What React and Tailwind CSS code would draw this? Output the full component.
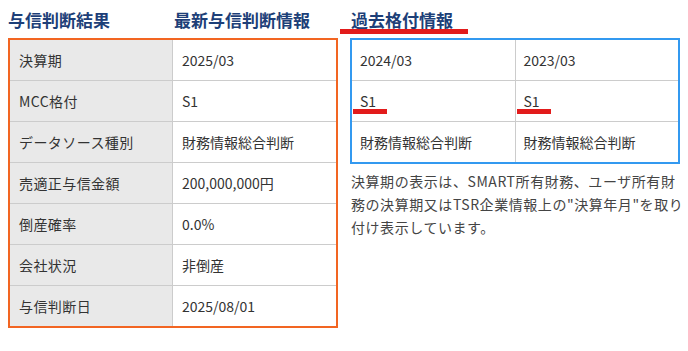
import React from "react";

const rows = [
  { label: "決算期", value: "2025/03" },
  { label: "MCC格付", value: "S1" },
  { label: "データソース種別", value: "財務情報総合判断" },
  { label: "売適正与信金額", value: "200,000,000円" },
  { label: "倒産確率", value: "0.0%" },
  { label: "会社状況", value: "非倒産" },
  { label: "与信判断日", value: "2025/08/01" },
];

const past = [
  { period: "2024/03", rating: "S1", source: "財務情報総合判断" },
  { period: "2023/03", rating: "S1", source: "財務情報総合判断" },
];

const App = () => {
  return (
    <div
      className="w-[688px] h-[351px] bg-white flex pl-[8px] text-[14px] text-[#333]"
      style={{ fontFamily: '"Noto Sans CJK JP", "Noto Sans", sans-serif' }}
    >
      {/* 左: 与信判断結果 */}
      <div className="w-[330px] flex flex-col">
        <div className="flex h-[30px] pt-[8px] text-[17px] leading-[24px] font-bold text-[#1d3f78]">
          <div className="w-[166px]">与信判断結果</div>
          <div>最新与信判断情報</div>
        </div>
        <div className="mt-[8px] border-2 border-[#f26522]">
          {rows.map((row, i) => (
            <div
              key={row.label}
              className={`flex items-center ${i > 0 ? "h-[41px] border-t border-[#cccccc]" : "h-[40px]"}`}
            >
              <div className="w-[163px] h-full flex items-center pl-[9px] bg-[#e9e9e9] border-r border-[#cccccc] tracking-[0.03em]">
                {row.label}
              </div>
              <div className="pl-[9px]">{row.value}</div>
            </div>
          ))}
        </div>
      </div>

      {/* 右: 過去格付情報 */}
      <div className="ml-[2px] flex flex-col">
        <div className="mt-[10px] w-[128px] pl-[11px] text-[17px] leading-[19px] font-bold text-[#1d3f78] border-b-[5px] border-[#e21b1b]">
          過去格付情報
        </div>
        <div className="ml-[10px] mt-[4px] w-[330px] border-2 border-[#3399f0] flex">
          {past.map((p, i) => (
            <div key={p.period} className={`flex-1 ${i > 0 ? "border-l border-[#cccccc]" : ""}`}>
              <div className="h-[40px] flex items-center pl-[8px]">{p.period}</div>
              <div className="h-[41px] border-t border-[#cccccc] flex items-center pl-[8px] relative">
                {p.rating}
                <span className="absolute left-[1px] top-[28px] w-[34px] h-[5px] bg-[#e21b1b]" />
              </div>
              <div className="h-[41px] border-t border-[#cccccc] flex items-center pl-[8px]">
                {p.source}
              </div>
            </div>
          ))}
        </div>
        <p className="ml-[11px] mt-[6px] w-[336px] whitespace-nowrap text-[14px] leading-[23px] tracking-[0.04em] text-[#444]">
          決算期の表示は、SMART所有財務、ユーザ所有財
          <br />
          務の決算期又はTSR企業情報上の"決算年月"を取り
          <br />
          付け表示しています。
        </p>
      </div>
    </div>
  );
};

export default App;
